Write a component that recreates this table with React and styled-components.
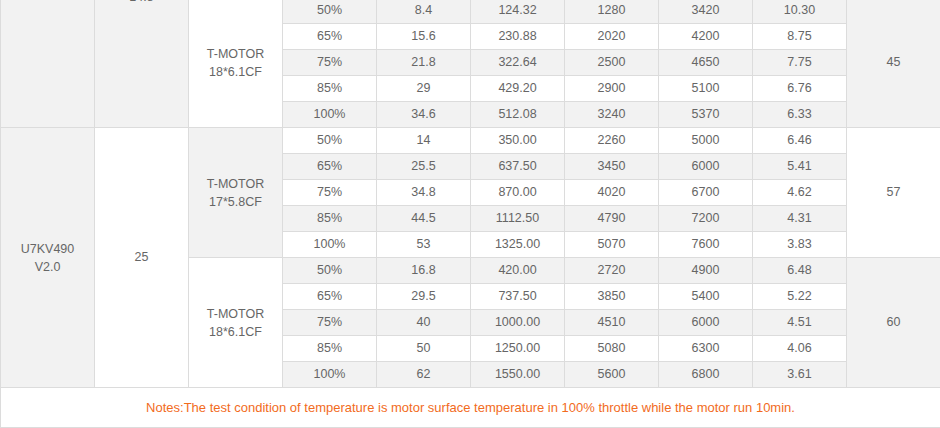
import React from 'react';
import styled, { createGlobalStyle } from 'styled-components';

const GlobalStyle = createGlobalStyle`
  html, body {
    margin: 0;
    padding: 0;
    background: #fff;
    overflow: hidden;
  }
`;

const groups = [
    {
        prop: ['T-MOTOR', '17*5.8CF'],
        temp: '41',
        propShade: true,
        tempShade: false,
        rows: [
            ['50%', '7.2', '106.56', '1150', '3500', '10.79'],
            ['65%', '13.4', '198.32', '1870', '4300', '9.42'],
            ['75%', '18.6', '275.28', '2310', '4780', '8.35'],
            ['85%', '24.7', '365.56', '2690', '5200', '7.36'],
            ['100%', '30.1', '445.48', '3010', '5500', '6.75'],
        ],
    },
    {
        prop: ['T-MOTOR', '18*6.1CF'],
        temp: '45',
        propShade: false,
        tempShade: true,
        rows: [
            ['50%', '8.4', '124.32', '1280', '3420', '10.30'],
            ['65%', '15.6', '230.88', '2020', '4200', '8.75'],
            ['75%', '21.8', '322.64', '2500', '4650', '7.75'],
            ['85%', '29', '429.20', '2900', '5100', '6.76'],
            ['100%', '34.6', '512.08', '3240', '5370', '6.33'],
        ],
    },
    {
        prop: ['T-MOTOR', '17*5.8CF'],
        temp: '57',
        propShade: true,
        tempShade: false,
        rows: [
            ['50%', '14', '350.00', '2260', '5000', '6.46'],
            ['65%', '25.5', '637.50', '3450', '6000', '5.41'],
            ['75%', '34.8', '870.00', '4020', '6700', '4.62'],
            ['85%', '44.5', '1112.50', '4790', '7200', '4.31'],
            ['100%', '53', '1325.00', '5070', '7600', '3.83'],
        ],
    },
    {
        prop: ['T-MOTOR', '18*6.1CF'],
        temp: '60',
        propShade: false,
        tempShade: true,
        rows: [
            ['50%', '16.8', '420.00', '2720', '4900', '6.48'],
            ['65%', '29.5', '737.50', '3850', '5400', '5.22'],
            ['75%', '40', '1000.00', '4510', '6000', '4.51'],
            ['85%', '50', '1250.00', '5080', '6300', '4.06'],
            ['100%', '62', '1550.00', '5600', '6800', '3.61'],
        ],
    },
];

// one motor/voltage block covers two propeller groups
const blocks = [
    { motor: [], volt: '14.8', voltShade: true, groups: [groups[0], groups[1]] },
    { motor: ['U7KV490', 'V2.0'], volt: '25', voltShade: false, groups: [groups[2], groups[3]] },
];

const App = () => {
    let rowIndex = 0;
    return (
        <>
            <GlobalStyle />
            <Page>
                <Table>
                    <colgroup>
                        {Array.from({ length: 10 }).map((_, i) => <col key={i} />)}
                    </colgroup>
                    <tbody>
                        {blocks.map((block, b) =>
                            block.groups.map((group, g) =>
                                group.rows.map((row, r) => {
                                    const shade = rowIndex++ % 2 === 1;
                                    return (
                                        <Row key={`${b}-${g}-${r}`}>
                                            {g === 0 && r === 0 && (
                                                <Cell rowSpan={10} $shade>
                                                    {block.motor.map((line) => <Line key={line}>{line}</Line>)}
                                                </Cell>
                                            )}
                                            {g === 0 && r === 0 && (
                                                <Cell rowSpan={10} $shade={block.voltShade}>{block.volt}</Cell>
                                            )}
                                            {r === 0 && (
                                                <Cell rowSpan={5} $shade={group.propShade}>
                                                    {group.prop.map((line) => <Line key={line}>{line}</Line>)}
                                                </Cell>
                                            )}
                                            {row.map((value, c) => (
                                                <Cell key={c} $shade={shade}>{value}</Cell>
                                            ))}
                                            {r === 0 && (
                                                <Cell rowSpan={5} $shade={group.tempShade}>{group.temp}</Cell>
                                            )}
                                        </Row>
                                    );
                                })
                            )
                        )}
                        <Row>
                            <NoteCell colSpan={10}>
                                Notes:The test condition of temperature is motor surface temperature in 100% throttle while the motor run 10min.
                            </NoteCell>
                        </Row>
                    </tbody>
                </Table>
            </Page>
        </>
    );
};

export default App;

const Page = styled.div`
    width: 940px;
    height: 428px;
    overflow: hidden;
`;

const Table = styled.table`
    width: 940px;
    margin-top: -133px;
    border-collapse: collapse;
    table-layout: fixed;
    font-family: "Liberation Sans", Arial, sans-serif;
    font-size: 12.5px;
    color: #666;

    col {
        width: 94px;
    }
`;

const Row = styled.tr`
    height: 26px;
`;

const Cell = styled.td`
    height: 25px;
    padding: 0;
    border: 1px solid #dcdcdc;
    text-align: center;
    vertical-align: middle;
    line-height: 17px;
    background: ${props => props.$shade ? '#f2f2f2' : '#fff'};
`;

const Line = styled.div`
    line-height: 18px;
`;

const NoteCell = styled.td`
    height: 39px;
    padding: 0;
    border: 1px solid #dcdcdc;
    text-align: center;
    vertical-align: middle;
    font-size: 13px;
    color: #f26b1d;
    background: #fff;
`;
